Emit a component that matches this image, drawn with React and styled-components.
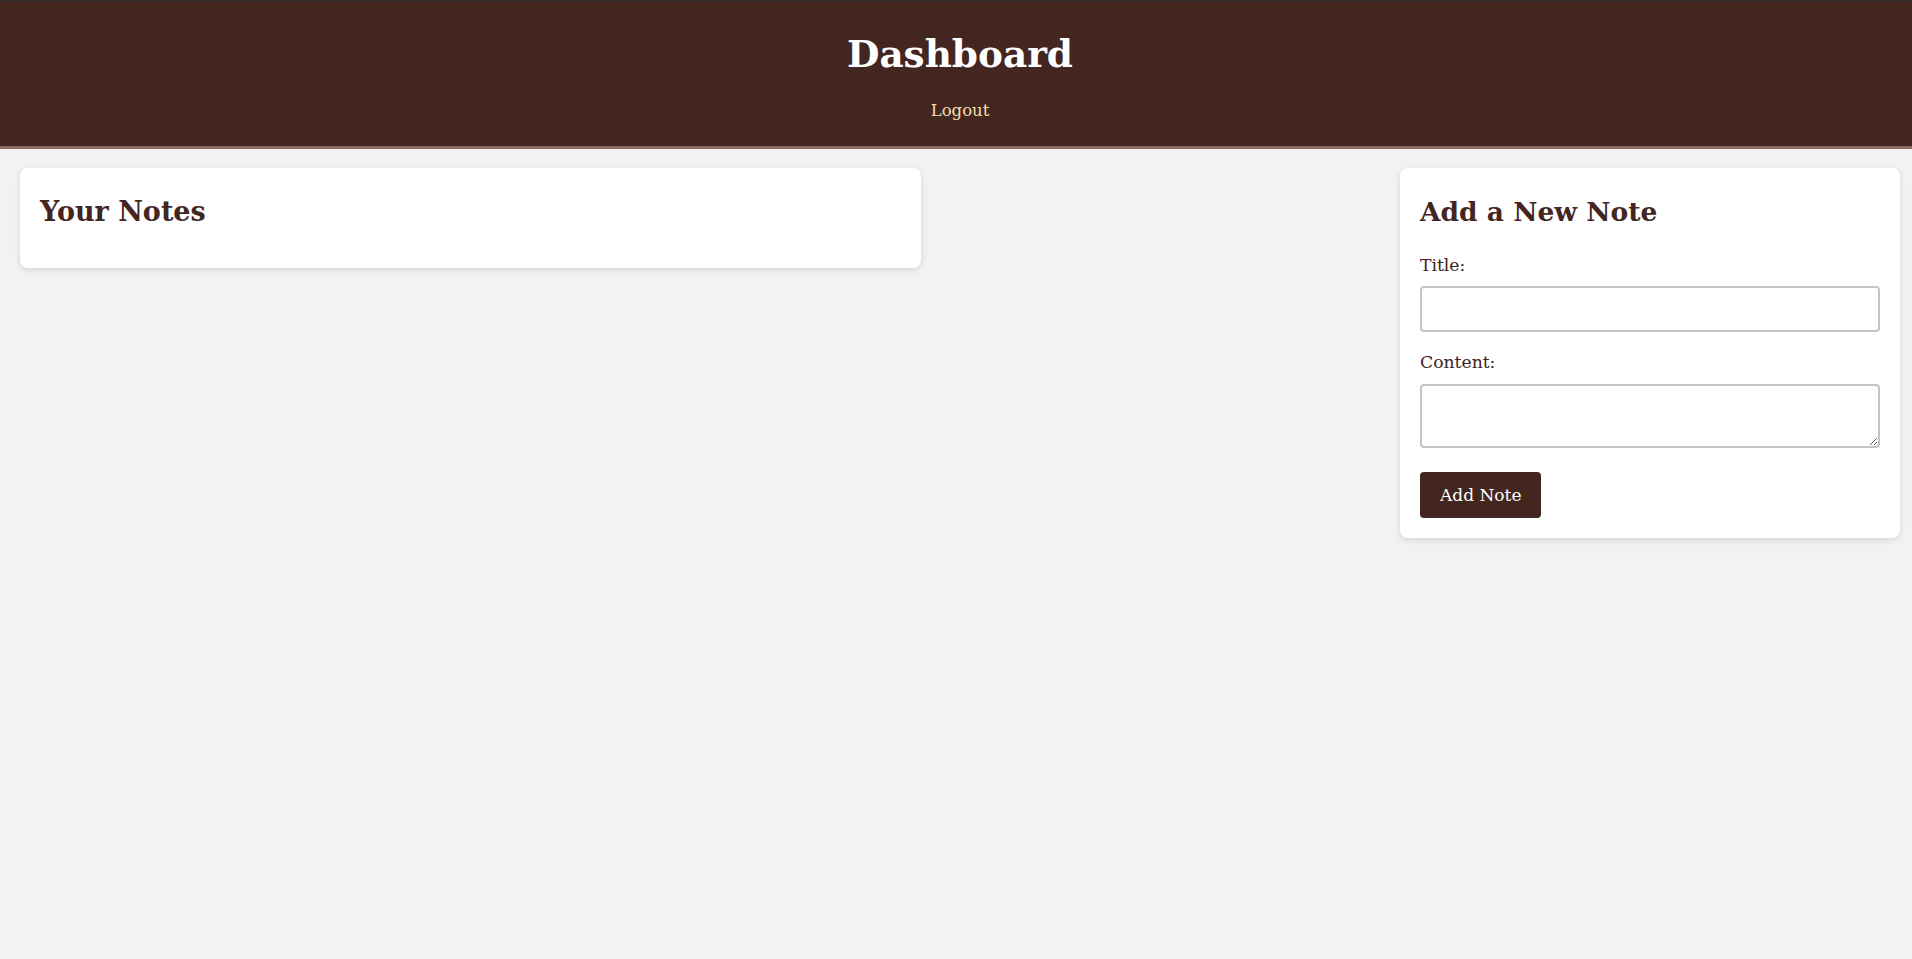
import React from "react";
import styled, { createGlobalStyle } from "styled-components";

const Global = createGlobalStyle`
  html, body { margin: 0; padding: 0; overflow-x: hidden; }
  body {
    background: #f2f2f2;
    font-family: "DejaVu Serif", "Liberation Serif", serif;
    color: #42261f;
  }
  * { box-sizing: border-box; }
`;

const Page = styled.div`
  width: 1920px;
  min-height: 959px;
  border-top: 1px solid #2f3537;
`;

const Header = styled.header`
  background: #42261f;
  border-bottom: 3px solid #8d6e63;
  padding: 32px 0 25px;
  display: flex;
  flex-direction: column;
  align-items: center;
`;

const Title = styled.h1`
  margin: 0 0 25px;
  font-size: 37.4px;
  line-height: 43px;
  font-weight: 700;
  color: #ffffff;
`;

const LogoutButton = styled.button`
  background: transparent;
  border: none;
  padding: 0;
  font-family: inherit;
  font-size: 16.5px;
  line-height: 20px;
  color: #f5deb3;
  cursor: pointer;
`;

const Main = styled.main`
  display: flex;
  justify-content: space-between;
  align-items: flex-start;
  padding: 19px 20px 20px;
`;

const Card = styled.section`
  background: #fff;
  border-radius: 8px;
  box-shadow: 0 2px 6px rgba(0, 0, 0, 0.12);
  padding: 20px;
  width: ${(p) => p.$width};
`;

const CardTitle = styled.h2`
  margin: 8px 0 ${(p) => p.$gap || "20px"};
  font-size: ${(p) => p.$size || "27px"};
  line-height: 32px;
  font-weight: 700;
  color: #42261f;
`;

const Form = styled.form`
  display: flex;
  flex-direction: column;
`;

const Field = styled.div`
  display: flex;
  flex-direction: column;
  margin-bottom: ${(p) => p.$gap};
`;

const Label = styled.label`
  font-size: 17.2px;
  line-height: 20.4px;
  color: #3e2320;
  margin-bottom: 11px;
`;

const TextInput = styled.input`
  height: 46px;
  width: 100%;
  border: 2px solid #c4c4c4;
  border-radius: 4px;
  padding: 8px 10px;
  font-family: inherit;
  font-size: 16px;
  background: #fff;
`;

const TextArea = styled.textarea`
  height: 64px;
  width: 100%;
  border: 2px solid #c4c4c4;
  border-radius: 4px;
  padding: 8px 10px;
  font-family: inherit;
  font-size: 16px;
  background: #fff;
  resize: vertical;
`;

const SubmitButton = styled.button`
  align-self: flex-start;
  height: 46px;
  padding: 0 20px;
  border: none;
  border-radius: 4px;
  background: #42261f;
  color: #fff;
  font-family: inherit;
  font-size: 17px;
  cursor: pointer;
`;

export default function App() {
  return (
    <Page>
      <Global />
      <Header>
        <Title>Dashboard</Title>
        <LogoutButton type="button">Logout</LogoutButton>
      </Header>
      <Main>
        <Card $width="901px">
          <CardTitle>Your Notes</CardTitle>
        </Card>
        <Card $width="500px">
          <CardTitle $gap="27px" $size="26.5px">Add a New Note</CardTitle>
          <Form onSubmit={(e) => e.preventDefault()}>
            <Field $gap="20px">
              <Label htmlFor="title">Title:</Label>
              <TextInput id="title" type="text" />
            </Field>
            <Field $gap="24px">
              <Label htmlFor="content">Content:</Label>
              <TextArea id="content" />
            </Field>
            <SubmitButton type="submit">Add Note</SubmitButton>
          </Form>
        </Card>
      </Main>
    </Page>
  );
}
